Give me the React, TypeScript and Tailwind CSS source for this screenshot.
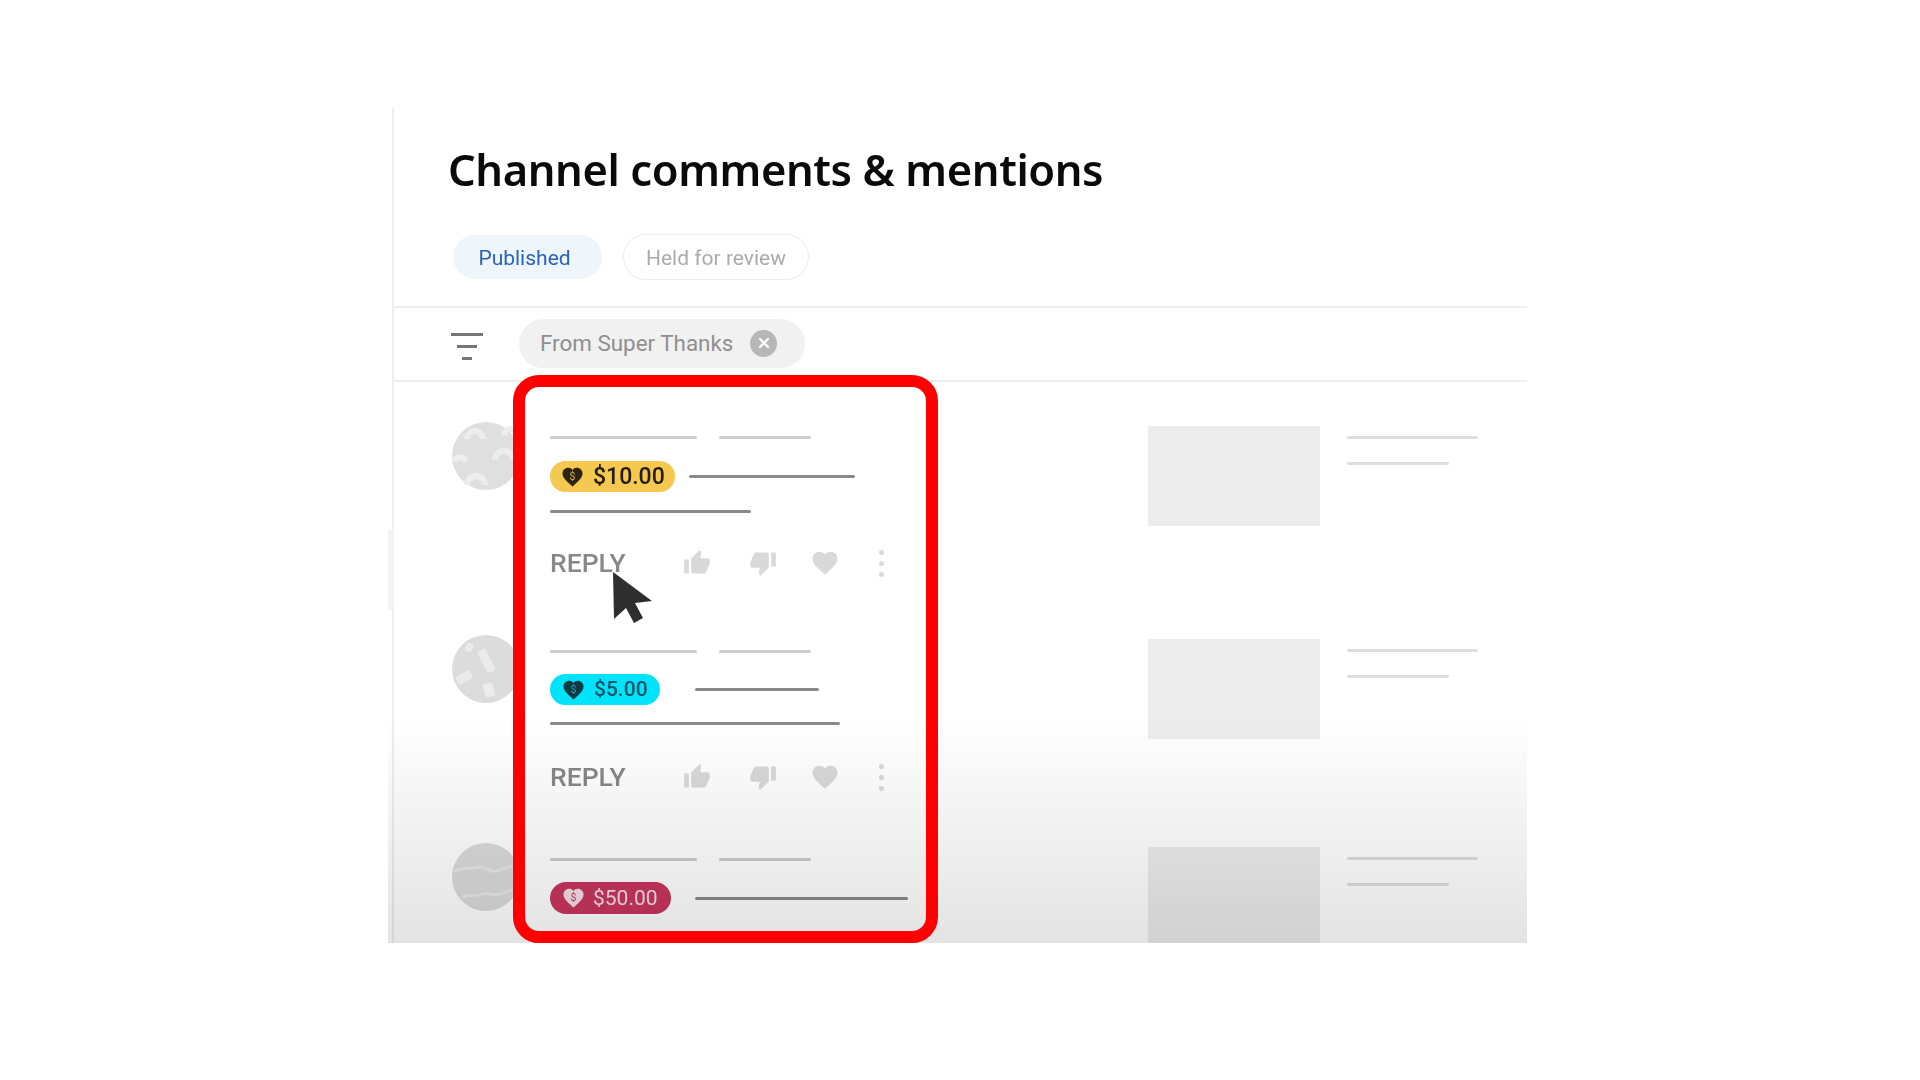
import React from "react";
import { MdThumbUp, MdThumbDown, MdFavorite } from "react-icons/md";

const font = "font-['Roboto',sans-serif]";

const Bar: React.FC<{ className: string }> = ({ className }) => (
  <div className={`h-[3px] rounded-full ${className}`} />
);

const HeartIcon: React.FC<{ fill: string; inner: string }> = ({ fill, inner }) => (
  <svg width="21" height="20" viewBox="0 0 24 23" className="shrink-0">
    <path
      d="M12 22.5l-1.7-1.5C4.6 15.9 0.5 12.3 0.5 7.6 0.5 3.9 3.4 1 7.1 1c2 0 3.8.9 4.9 2.4C13.1 1.9 14.9 1 16.9 1c3.7 0 6.6 2.9 6.6 6.6 0 4.7-4.1 8.3-9.8 13.4L12 22.5z"
      fill={fill}
    />
    <text x="12" y="15.5" fontSize="12" fontFamily="Roboto, sans-serif" textAnchor="middle" fill={inner}>
      $
    </text>
  </svg>
);

const AvatarArcs = () => (
  <svg viewBox="0 0 68 68" className="w-[68px] h-[68px]">
    <circle cx="34" cy="34" r="34" fill="#dfdfdf" />
    <g fill="none" stroke="#ededed" strokeWidth="6">
      <path d="M15 17a8 8 0 0 1 16 0" />
      <path d="M43 38a9 9 0 0 1 18 0" />
      <path d="M2 39a7 7 0 0 1 12 0" />
      <path d="M15 63a9 9 0 0 1 18 0" />
      <path d="M52 13a6 6 0 0 1 12 0" />
    </g>
  </svg>
);

const AvatarConfetti = () => (
  <svg viewBox="0 0 68 68" className="w-[68px] h-[68px]">
    <circle cx="34" cy="34" r="34" fill="#dcdcdc" />
    <g fill="#ebebeb">
      <rect x="30" y="14" width="9" height="24" rx="2" transform="rotate(-28 34 26)" />
      <rect x="8" y="34" width="9" height="16" rx="2" transform="rotate(62 12 42)" />
      <rect x="32" y="48" width="10" height="14" rx="2" transform="rotate(-15 37 55)" />
      <rect x="14" y="8" width="7" height="9" rx="2" transform="rotate(30 17 12)" />
    </g>
  </svg>
);

const AvatarWaves = () => (
  <svg viewBox="0 0 68 68" className="w-[68px] h-[68px]">
    <circle cx="34" cy="34" r="34" fill="#dbdbdb" />
    <g fill="none" stroke="#e8e8e8" strokeWidth="3">
      <path d="M2 28c10-4 18-2 26-4 8-1 8 6 16 4 8-2 14-6 22-4" />
      <path d="M10 54c8-3 14 0 20-3 8-2 10 3 18 0 6-2 10-3 14-4" />
    </g>
  </svg>
);

const Actions = () => (
  <div className="flex items-center h-[26px]">
    <span className={`${font} w-[133px] text-[26.5px] leading-none font-medium text-[#888888]`}>REPLY</span>
    <MdThumbUp className="w-[28px] h-[28px] text-[#d9d9d9]" />
    <MdThumbDown className="ml-[38px] w-[28px] h-[28px] text-[#d9d9d9]" />
    <MdFavorite className="ml-[33px] w-[30px] h-[30px] text-[#d9d9d9]" />
    <div className="ml-[39px] flex flex-col gap-[6px]">
      <div className="w-[5px] h-[5px] rounded-full bg-[#d9d9d9]" />
      <div className="w-[5px] h-[5px] rounded-full bg-[#d9d9d9]" />
      <div className="w-[5px] h-[5px] rounded-full bg-[#d9d9d9]" />
    </div>
  </div>
);

const Related = () => (
  <>
    <div className="w-[172px] h-[100px] shrink-0 bg-[#ececec]" />
    <div className="ml-[27px] pt-[10px] flex flex-col gap-[23px]">
      <Bar className="w-[131px] bg-[#dedede]" />
      <Bar className="w-[102px] bg-[#dedede]" />
    </div>
  </>
);

const TopBars = () => (
  <div className="flex gap-[22px]">
    <Bar className="w-[147px] bg-[#cdcdcd]" />
    <Bar className="w-[92px] bg-[#cdcdcd]" />
  </div>
);

export default function App() {
  return (
    <div className="w-[1920px] h-[1080px] bg-white pt-[108px] pl-[388px] overflow-hidden">
      <div className="relative w-[1139px] h-[835px] overflow-hidden">
        <div className="ml-[4px] h-full border-l-2 border-[#efefef] blur-[0.5px]">
          <header className="h-[200px] border-b-2 border-[#eeeeee] pl-[54px]">
            <h1 className="pt-[31px] font-['Noto_Sans',sans-serif] text-[43.5px] leading-[60px] font-semibold tracking-[-0.4px] text-[#0a0a0a]">
              Channel comments &amp; mentions
            </h1>
            <div className={`${font} mt-[35px] flex items-center text-[21px] ml-[5px]`}>
              <div className="w-[149px] h-[44px] rounded-full bg-[#eef6fc] text-[#2a63b7] pr-[6px] pt-[3px] flex items-center justify-center">
                Published
              </div>
              <div className="ml-[21px] w-[186px] h-[46px] rounded-full border border-[#ececec] text-[#ababab] pt-[3px] flex items-center justify-center">
                Held for review
              </div>
            </div>
          </header>

          <div className="h-[74px] border-b-2 border-[#eeeeee] pl-[57px] flex items-center">
            <svg width="33" height="28" viewBox="0 0 33 28" className="shrink-0 mt-[6px]">
              <rect x="0" y="0" width="32" height="3" fill="#777777" />
              <rect x="6" y="12" width="20" height="3" fill="#777777" />
              <rect x="11" y="24" width="10" height="3" fill="#777777" />
            </svg>
            <div className="ml-[35px] mb-[2px] w-[286px] h-[49px] rounded-full bg-[#f1f1f1] pl-[21px] flex items-center">
              <span className={`${font} mt-[2px] w-[197px] text-[22.4px] text-[#8f8f8f] whitespace-nowrap`}>From Super Thanks</span>
              <div className="ml-[13px] w-[27px] h-[27px] rounded-full bg-[#b7b7b7] flex items-center justify-center">
                <svg width="12" height="12" viewBox="0 0 12 12">
                  <path d="M2 2l8 8M10 2l-8 8" stroke="#ffffff" strokeWidth="2.4" strokeLinecap="round" />
                </svg>
              </div>
            </div>
          </div>

          <div className="pt-[40px] pl-[58px]">
            <div className="h-[213px] flex">
              <div className="w-[98px] shrink-0"><AvatarArcs /></div>
              <div className="w-[598px] shrink-0 pt-[14px]">
                <TopBars />
                <div className="mt-[22px] flex items-center">
                  <div className="w-[125px] h-[31px] rounded-full bg-[#f5c84f] pl-[12px] flex items-center">
                    <HeartIcon fill="#2b2410" inner="#d8b04a" />
                    <span className={`${font} ml-[10px] text-[23px] leading-none font-medium text-[#221c08]`}>$10.00</span>
                  </div>
                  <Bar className="ml-[14px] w-[166px] bg-[#8a8a8a]" />
                </div>
                <Bar className="mt-[18px] w-[201px] bg-[#8a8a8a]" />
                <div className="mt-[37px]"><Actions /></div>
              </div>
              <div className="pt-[4px] flex items-start"><Related /></div>
            </div>

            <div className="h-[208px] flex">
              <div className="w-[98px] shrink-0"><AvatarConfetti /></div>
              <div className="w-[598px] shrink-0 pt-[15px]">
                <TopBars />
                <div className="mt-[21px] flex items-center">
                  <div className="w-[110px] h-[31px] rounded-full bg-[#00e3fb] pl-[13px] flex items-center">
                    <HeartIcon fill="#0c3a45" inner="#2f9fb0" />
                    <span className={`${font} ml-[10px] text-[21px] leading-none font-medium text-[#0b5566]`}>$5.00</span>
                  </div>
                  <Bar className="ml-[35px] w-[124px] bg-[#8a8a8a]" />
                </div>
                <Bar className="mt-[17px] w-[290px] bg-[#8a8a8a]" />
                <div className="mt-[39px]"><Actions /></div>
              </div>
              <div className="pt-[4px] flex items-start"><Related /></div>
            </div>

            <div className="flex">
              <div className="w-[98px] shrink-0"><AvatarWaves /></div>
              <div className="w-[598px] shrink-0 pt-[15px]">
                <TopBars />
                <div className="mt-[21px] flex items-center">
                  <div className="w-[121px] h-[32px] rounded-full bg-[#c8365f] pl-[13px] flex items-center">
                    <HeartIcon fill="#f6dfe6" inner="#c8365f" />
                    <span className={`${font} ml-[9px] text-[21px] leading-none text-[#f5dde5]`}>$50.00</span>
                  </div>
                  <Bar className="ml-[24px] w-[213px] bg-[#8a8a8a]" />
                </div>
              </div>
              <div className="pt-[4px] flex items-start"><Related /></div>
            </div>
          </div>
        </div>

        {/* scrollbar ghost on the left edge of the clip */}
        <div className="absolute left-0 top-[422px] w-[5px] h-[80px] bg-[#f4f4f4]" />

        {/* the clip fades to grey towards the bottom */}
        <div className="absolute left-0 right-0 top-[607px] bottom-0 bg-gradient-to-b from-[#00000000] to-[#0000001c]" />

        <div className="absolute left-[125px] top-[267px] w-[425px] h-[568px] border-[12px] border-[#ff0000] rounded-[26px]" />

        <svg width="44" height="54" viewBox="0 0 44 54" className="absolute left-[224px] top-[463px]">
          <path d="M1 1l1 47 12-11 8 15 9-5-8-15 17-2z" fill="#2e2e2e" />
        </svg>
      </div>
    </div>
  );
}
